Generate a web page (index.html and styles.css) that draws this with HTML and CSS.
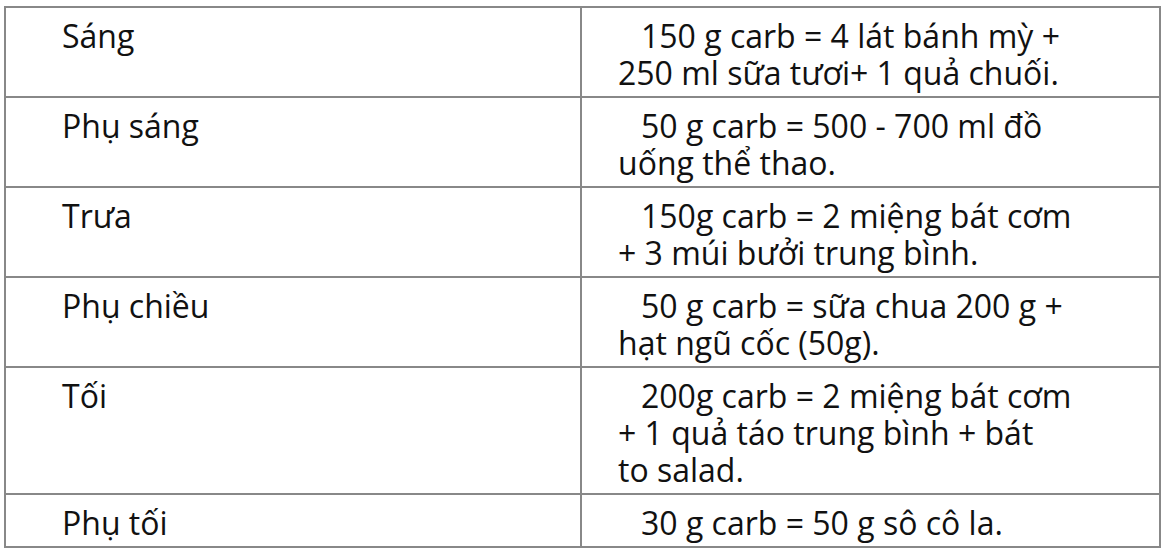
FILE: index.html
```html
<!DOCTYPE html>
<html lang="vi">
<head>
<meta charset="utf-8">
<title>Carb</title>
<link rel="stylesheet" href="styles.css">
</head>
<body>
<table class="meals">
  <tr>
    <td class="meal">Sáng</td>
    <td class="food"><span class="first">150 g carb = 4 lát bánh mỳ +</span><br>250 ml sữa tươi+ 1 quả chuối.</td>
  </tr>
  <tr>
    <td class="meal">Phụ sáng</td>
    <td class="food"><span class="first">50 g carb = 500 - 700 ml đồ</span><br>uống thể thao.</td>
  </tr>
  <tr>
    <td class="meal">Trưa</td>
    <td class="food"><span class="first">150g carb = 2 miệng bát cơm</span><br>+ 3 múi bưởi trung bình.</td>
  </tr>
  <tr>
    <td class="meal">Phụ chiều</td>
    <td class="food"><span class="first">50 g carb = sữa chua 200 g +</span><br>hạt ngũ cốc (50g).</td>
  </tr>
  <tr>
    <td class="meal">Tối</td>
    <td class="food"><span class="first">200g carb = 2 miệng bát cơm</span><br>+ 1 quả táo trung bình + bát<br>to salad.</td>
  </tr>
  <tr>
    <td class="meal">Phụ tối</td>
    <td class="food"><span class="first">30 g carb = 50 g sô cô la.</span></td>
  </tr>
</table>
</body>
</html>
```

FILE: styles.css
```css
html, body {
  margin: 0;
  padding: 0;
  background: #ffffff;
}

.meals {
  margin: 6px 0 0 4px;
  width: 1157px;
  border-collapse: collapse;
  border: 2px solid #888888;
  font-family: "Open Sans", "Noto Sans", sans-serif;
  font-size: 32px;
  line-height: 37px;
  color: #111111;
  table-layout: fixed;
}

.meals td {
  border: 2px solid #888888;
  vertical-align: top;
  padding: 9px 10px 5px 10px;
  white-space: nowrap;
}

.meal {
  width: 508px;
  padding-left: 56px !important;
}

.food {
  padding-left: 36px !important;
}

.first {
  display: inline-block;
  padding-left: 23px;
}
```
